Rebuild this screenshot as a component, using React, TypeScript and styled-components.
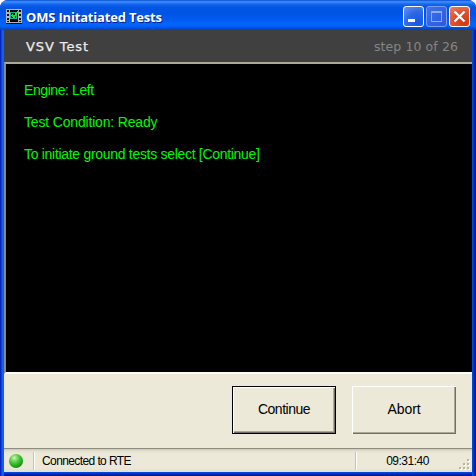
import React from "react";
import styled, { createGlobalStyle } from "styled-components";

const GlobalStyle = createGlobalStyle`
  * { box-sizing: border-box; }
  body { margin: 0; background: #fff; }
`;

const Window = styled.div`
  width: 476px;
  height: 476px;
  display: flex;
  flex-direction: column;
  overflow: hidden;
  border-radius: 8px 8px 0 0;
  background: #0046e0;
  font-family: "Liberation Sans", Arial, sans-serif;
`;

const TitleBar = styled.header`
  height: 30px;
  flex: none;
  display: flex;
  align-items: center;
  padding: 3px 6px 0 6px;
  background: linear-gradient(
    180deg,
    #0842c0 0, #2a80f5 1px, #3a8dfc 2px, #1568ee 4px, #0456e4 7px,
    #0054e3 12px, #0058ee 18px, #0364fc 24px, #0262fb 26px, #0150dc 28px, #0040c0 30px
  );
`;

const Title = styled.h1`
  flex: 1;
  margin: 0 0 0 4px;
  color: #fff;
  font: 700 13px/20px "Open Sans", sans-serif;
  letter-spacing: -0.18px;
  white-space: nowrap;
  text-shadow: 1px 1px 0 #0a1f8c;
`;

const Controls = styled.div`
  display: flex;
  gap: 2px;
`;

const ControlButton = styled.button<{ $kind: "normal" | "disabled" | "close" }>`
  width: 21px;
  height: 21px;
  padding: 0;
  display: flex;
  border: 1px solid ${(p) => (p.$kind === "disabled" ? "#7b9df0" : "#fff")};
  border-radius: 3px;
  background: ${(p) =>
    p.$kind === "close"
      ? "radial-gradient(circle at 75% 85%, #d8380c 0, #dd4f2b 50%, #e8856c 100%)"
      : p.$kind === "disabled"
        ? "linear-gradient(135deg, #3f72ea, #2659df)"
        : "radial-gradient(circle at 75% 85%, #1557e8 0, #2b66e6 50%, #6a94f0 100%)"};
`;

const Frame = styled.main`
  flex: 1;
  min-height: 0;
  display: flex;
  flex-direction: column;
  padding: 0 4px 4px;
  background:
    linear-gradient(90deg, #001ba0 0, #0831d9 1px, #0f58ee 2px, #166aee 3px, #0855dd 4px) left / 4px 100% no-repeat,
    linear-gradient(90deg, #0050e8 0, #0040d8 1px, #0030c0 2px, #001ca0 3px, #00138c 4px) right / 4px 100% no-repeat,
    linear-gradient(180deg, #0050e8 0, #0040d8 1px, #0028b0 2px, #00138c 4px) bottom / 100% 4px no-repeat;
`;

const StepHeader = styled.div`
  height: 32px;
  flex: none;
  display: flex;
  justify-content: space-between;
  align-items: center;
  padding: 1px 14px 0 22px;
  background: #404040;
  font-family: "DejaVu Sans", sans-serif;
  font-size: 12.5px;
  line-height: 16px;
`;

const StepTitle = styled.h2`
  margin: 0;
  color: #ececec;
  font-size: 13px;
  font-weight: 400;
  letter-spacing: 0.9px;
  -webkit-text-stroke: 0.25px #ececec;
`;

const StepCount = styled.span`
  color: #858585;
  letter-spacing: 0.1px;
`;

const Console = styled.section`
  height: 312px;
  flex: none;
  padding: 18px 18px 0;
  display: flex;
  flex-direction: column;
  gap: 16px;
  border-style: solid;
  border-width: 2px 0 2px 2px;
  border-color: #aca899 #fff #fffef6 #8c887b;
  background: #000;
  color: #00fa00;
`;

const Line = styled.p<{ $tracking: number }>`
  margin: 0;
  font-size: 14px;
  line-height: 16px;
  letter-spacing: ${(p) => p.$tracking}px;
  white-space: nowrap;
`;

const Actions = styled.footer`
  flex: 1;
  display: flex;
  justify-content: flex-end;
  align-items: flex-start;
  gap: 16px;
  padding: 12px 16px 0;
  background: #ece9d8;
`;

const ActionButton = styled.button<{ $primary?: boolean }>`
  width: 104px;
  height: 48px;
  padding: 0 0 2px;
  border: ${(p) => (p.$primary ? "1px solid #000" : "0")};
  border-radius: 0;
  background: #ece9d8;
  box-shadow: inset 1px 1px #fff, inset -1px -1px #716f64, inset -2px -2px #aca899;
  color: #000;
  font: 14px/16px "Liberation Sans", Arial, sans-serif;
  letter-spacing: ${(p) => (p.$primary ? -0.5 : -0.1)}px;
`;

const StatusBar = styled.div`
  height: 24px;
  flex: none;
  display: flex;
  align-items: stretch;
  border-top: 1px solid #8f8c80;
  background: linear-gradient(180deg, #c9c6b7 0, #e4e1d0 2px, #ece9d8 5px, #ece9d8 19px, #e2dfce 23px);
  color: #000;
  font-size: 12px;
  line-height: 16px;
`;

const StatusCell = styled.div<{ $width?: number; $divided?: boolean; $center?: boolean }>`
  ${(p) => (p.$width ? `width: ${p.$width}px;` : "flex: 1;")}
  display: flex;
  align-items: center;
  margin: 3px 0 2px;
  justify-content: ${(p) => (p.$center ? "center" : "flex-start")};
  padding-left: ${(p) => (p.$center ? 0 : p.$divided ? 8 : 5)}px;
  border-left: ${(p) => (p.$divided ? "1px solid #c5c2b2" : "0")};
  box-shadow: ${(p) => (p.$divided ? "inset 1px 0 #fff" : "none")};
  white-space: nowrap;
`;

const StatusText = styled.span<{ $tracking: number }>`
  letter-spacing: ${(p) => p.$tracking}px;
`;

const Led = styled.span`
  width: 14px;
  height: 14px;
  border-radius: 50%;
  background: radial-gradient(circle at 38% 28%, #d5f5c8 0, #7fdc68 20%, #35b82c 48%, #149214 75%, #327a2c 100%);
`;

const dots = [[8, 0], [4, 4], [8, 4], [0, 8], [4, 8], [8, 8]];

const FilmIcon = () => (
  <svg width="16" height="16" viewBox="0 0 16 16" shapeRendering="crispEdges">
    <path fill="#b4b4b4" d="M0 0h16v14H0z" />
    <path fill="#101010" d="M1 1h2v2H1zM1 5h2v2H1zM1 9h2v2H1zM1 12h2v1H1zM13 1h2v2h-2zM13 5h2v2h-2zM13 9h2v2h-2zM13 12h2v1h-2z" />
    <path fill="#000" d="M4 1h8v12H4z" />
    <path fill="none" stroke="#12b4a8" d="M4.5 3.5h6v6h-6z" />
    <path fill="none" stroke="#12e428" strokeWidth="1.5" d="M6 6l2 2 4-6" />
    <path fill="#101010" d="M0 14h16v1H0z" />
  </svg>
);

const SizeGrip = styled.svg`
  align-self: flex-end;
  flex: none;
  margin: 0 1px 1px 0;
`;

export default function App() {
  return (
    <>
      <GlobalStyle />
      <Window>
        <TitleBar>
          <FilmIcon />
          <Title>OMS Initatiated Tests</Title>
          <Controls>
            <ControlButton $kind="normal" aria-label="Minimize">
              <svg width="19" height="19"><path fill="#fff" d="M4 12h7v3H4z" /></svg>
            </ControlButton>
            <ControlButton $kind="disabled" aria-label="Maximize" disabled>
              <svg width="19" height="19" shapeRendering="crispEdges">
                <path fill="none" stroke="#8eaaf3" d="M4.5 4.5h10v10h-10zM4 5.5h11" />
              </svg>
            </ControlButton>
            <ControlButton $kind="close" aria-label="Close">
              <svg width="19" height="19"><path stroke="#fff" strokeWidth="2.2" d="M4.5 4.5l10 10M14.5 4.5l-10 10" /></svg>
            </ControlButton>
          </Controls>
        </TitleBar>
        <Frame>
          <StepHeader>
            <StepTitle>VSV Test</StepTitle>
            <StepCount>step 10 of 26</StepCount>
          </StepHeader>
          <Console>
            <Line $tracking={-0.42}>Engine: Left</Line>
            <Line $tracking={-0.17}>Test Condition: Ready</Line>
            <Line $tracking={-0.3}>To initiate ground tests select [Continue]</Line>
          </Console>
          <Actions>
            <ActionButton $primary>Continue</ActionButton>
            <ActionButton>Abort</ActionButton>
          </Actions>
          <StatusBar>
            <StatusCell $width={29}><Led /></StatusCell>
            <StatusCell $divided><StatusText $tracking={-0.6}>Connected to RTE</StatusText></StatusCell>
            <StatusCell $divided $center $width={104}><StatusText $tracking={-0.5}>09:31:40</StatusText></StatusCell>
            <SizeGrip width="12" height="12" shapeRendering="crispEdges">
              {dots.map(([x, y]) => (
                <React.Fragment key={`${x}-${y}`}>
                  <rect x={x + 1} y={y + 1} width="2" height="2" fill="#fff" />
                  <rect x={x} y={y} width="2" height="2" fill="#b8b4a3" />
                </React.Fragment>
              ))}
            </SizeGrip>
          </StatusBar>
        </Frame>
      </Window>
    </>
  );
}
